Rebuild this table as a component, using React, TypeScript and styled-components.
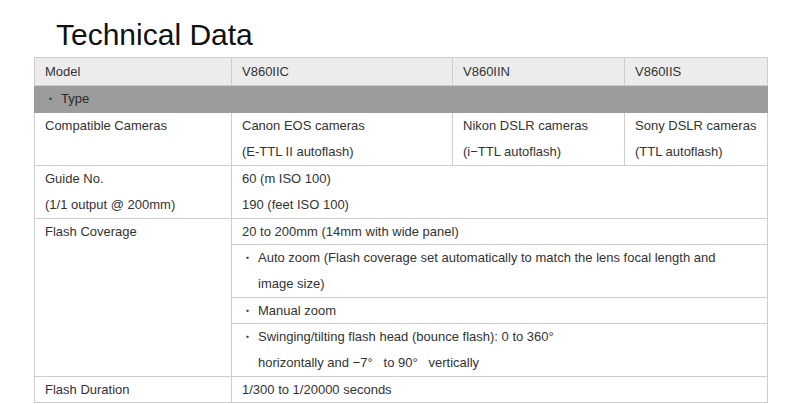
import React from "react";
import styled, { createGlobalStyle } from "styled-components";

const GlobalStyle = createGlobalStyle`
  html, body {
    margin: 0;
    padding: 0;
    background: #ffffff;
  }
  body {
    font-family: "Liberation Sans", Arial, "Noto Sans CJK JP", sans-serif;
  }
`;

type Row = {
  label?: string[];
  labelSpan?: number;
  cells: { lines: string[]; span?: number; bullet?: boolean }[];
};

const rows: Row[] = [
  {
    label: ["Compatible Cameras"],
    cells: [
      { lines: ["Canon EOS cameras", "(E-TTL II autoflash)"] },
      { lines: ["Nikon DSLR cameras", "(i−TTL autoflash)"] },
      { lines: ["Sony DSLR cameras", "(TTL autoflash)"] },
    ],
  },
  {
    label: ["Guide No.", "(1/1 output @ 200mm)"],
    cells: [{ lines: ["60 (m ISO 100)", "190 (feet ISO 100)"], span: 3 }],
  },
  {
    label: ["Flash Coverage"],
    labelSpan: 4,
    cells: [{ lines: ["20 to 200mm (14mm with wide panel)"], span: 3 }],
  },
  {
    cells: [
      {
        lines: [
          "Auto zoom (Flash coverage set automatically to match the lens focal length and",
          "image size)",
        ],
        span: 3,
        bullet: true,
      },
    ],
  },
  { cells: [{ lines: ["Manual zoom"], span: 3, bullet: true }] },
  {
    cells: [
      {
        lines: [
          "Swinging/tilting flash head (bounce flash): 0 to 360°",
          "horizontally and −7°   to 90°   vertically",
        ],
        span: 3,
        bullet: true,
      },
    ],
  },
  {
    label: ["Flash Duration"],
    cells: [{ lines: ["1/300 to 1/20000 seconds"], span: 3 }],
  },
];

function App() {
  return (
    <Page>
      <GlobalStyle />
      <Title>Technical Data</Title>
      <Table>
        <colgroup>
          <col style={{ width: 197 }} />
          <col style={{ width: 221 }} />
          <col style={{ width: 172 }} />
          <col />
        </colgroup>
        <tbody>
          <HeadRow>
            <Cell>Model</Cell>
            <Cell>V860IIC</Cell>
            <Cell>V860IIN</Cell>
            <Cell>V860IIS</Cell>
          </HeadRow>
          <SectionRow>
            <Cell colSpan={4}>
              <Bullet>・</Bullet>Type
            </Cell>
          </SectionRow>
          {rows.map((row, i) => (
            <tr key={i}>
              {row.label && (
                <Cell rowSpan={row.labelSpan}>
                  {row.label.map((l) => (
                    <Line key={l}>{l}</Line>
                  ))}
                </Cell>
              )}
              {row.cells.map((c, j) => (
                <Cell key={j} colSpan={c.span}>
                  {c.lines.map((l, k) => (
                    <Line key={k} $indent={c.bullet && k > 0}>
                      {c.bullet && k === 0 && <Bullet>・</Bullet>}
                      {l}
                    </Line>
                  ))}
                </Cell>
              ))}
            </tr>
          ))}
        </tbody>
      </Table>
    </Page>
  );
}

export default App;

const Page = styled.div`
  width: 800px;
  height: 404px;
  padding: 16px 0 0 34px;
  box-sizing: border-box;
  overflow: hidden;
`;

const Title = styled.h1`
  margin: 0 0 4px 22px;
  font-size: 30px;
  font-weight: normal;
  line-height: 37px;
  color: #111;
`;

const Table = styled.table`
  width: 734px;
  border-collapse: collapse;
  table-layout: fixed;
  border: 1px solid #b9b9b9;
  font-size: 13px;
  color: #333;
`;

const Cell = styled.td`
  border: 1px solid #cdcdcd;
  padding: 0 10px;
  line-height: 25px;
  height: 25px;
  vertical-align: top;
  white-space: pre;
`;

const HeadRow = styled.tr`
  background: #ececec;
  td {
    line-height: 27px;
    height: 27px;
  }
`;

const SectionRow = styled.tr`
  background: #9c9c9c;
  td {
    color: #2a2a2a;
    border-color: #9c9c9c;
    line-height: 26px;
  }
`;

const Line = styled.div<{ $indent?: boolean }>`
  height: 26px;
  line-height: 26px;
  padding-left: ${(p) => (p.$indent ? "16px" : "0")};
  &:only-child {
    height: 25px;
    line-height: 25px;
  }
`;

const Bullet = styled.span`
  display: inline-block;
  width: 16px;
  line-height: 0;
  font-family: "Noto Sans CJK JP", sans-serif;
  font-size: 11px;
`;
